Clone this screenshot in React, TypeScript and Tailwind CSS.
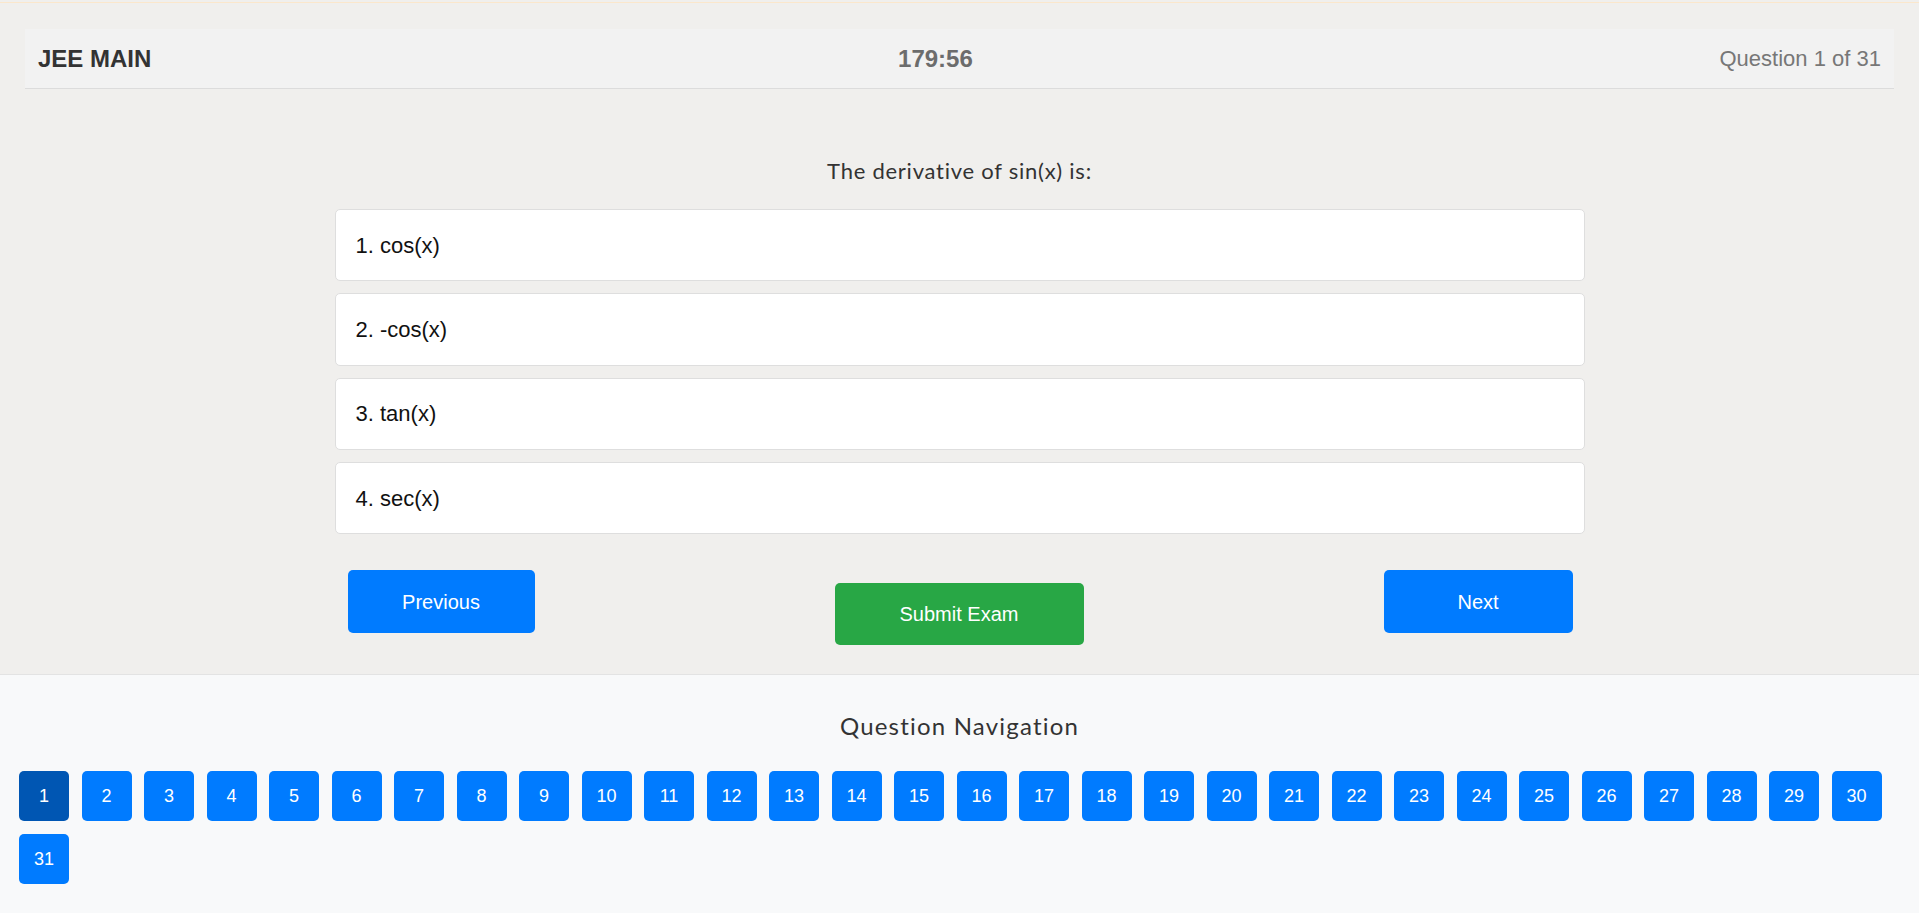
import { useState } from "react"

const options = ["cos(x)", "-cos(x)", "tan(x)", "sec(x)"]

const App = () => {
    const [current, setCurrent] = useState(1)
    const total = 31

  return (
    <div className="min-h-screen bg-[#f0efed] font-['Liberation_Sans',Arial,sans-serif]">
        <div className="pt-[2px]">
            <div className="h-px bg-[#fbe7cc]" />
        </div>
        <div className="px-[25px] pt-[26px]">
            <header className="h-[60px] flex items-center justify-between px-[13px] bg-[#f2f2f2] border-b border-[#dcdcdc]">
                <h1 className="text-[24px] font-bold text-[#333]">JEE MAIN</h1>
                <div className="text-[24px] font-bold text-[#6c6c6c]">179:56</div>
                <div className="text-[22px] text-[#777]">Question {current} of {total}</div>
            </header>
        </div>

        <main className="pt-[67px] pb-[29px]">
            <p className="text-center text-[22px] leading-[30px] tracking-[0.75px] text-[#333] font-['Lato',sans-serif]">The derivative of sin(x) is:</p>
            <div className="w-[1250px] mx-auto mt-[23px] flex flex-col gap-3">
                {options.map((opt, i) => (
                    <div key={i} className="h-[72.3px] flex items-center px-[20px] bg-white border border-[#dedede] rounded-[5px] text-[22px] text-[#111]">
                        {i + 1}. {opt}
                    </div>
                ))}
                <div className="flex justify-between items-start pl-[13px] pr-[12px] mt-[24px]">
                    <button className="w-[187px] h-[63px] bg-[#007bff] text-white text-[20px] rounded-[5px]" onClick={() => setCurrent(Math.max(1, current - 1))}>Previous</button>
                    <button className="w-[249px] h-[62px] mt-[13px] bg-[#28a745] text-white text-[20px] rounded-[5px]">Submit Exam</button>
                    <button className="w-[189px] h-[63px] bg-[#007bff] text-white text-[20px] rounded-[5px]" onClick={() => setCurrent(Math.min(total, current + 1))}>Next</button>
                </div>
            </div>
        </main>

        <section className="bg-[#f8f9fa] border-t border-[#e3e3e3] pt-[36px] pb-[29px] px-[19px]">
            <h2 className="text-center text-[24px] leading-[30px] tracking-[1.2px] text-[#333] font-['Lato',sans-serif]">Question Navigation</h2>
            <div className="flex flex-wrap gap-x-[12.5px] gap-y-[13px] mt-[30px]">
                {Array.from({ length: total }, (_, i) => i + 1).map(n => (
                    <button key={n} onClick={() => setCurrent(n)} className={(n === current ? "bg-[#0056b3]" : "bg-[#007bff]") + " w-[50px] h-[50px] rounded-[5px] text-white text-[18px]"}>
                        {n}
                    </button>
                ))}
            </div>
        </section>
    </div>
  )
}

export default App
